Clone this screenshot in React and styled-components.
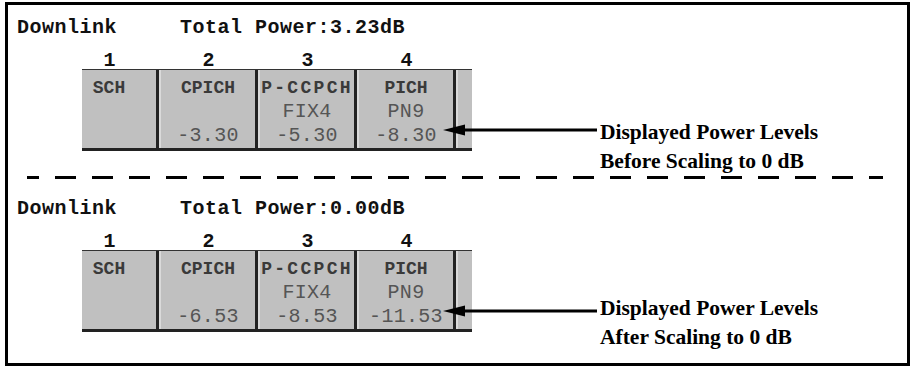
import React from 'react';
import styled, { createGlobalStyle } from 'styled-components';

const GlobalStyle = createGlobalStyle`
html, body {
  margin: 0;
  padding: 0;
  background: #ffffff;
}
`

const Frame = styled.div`
box-sizing: border-box;
width: 905px;
height: 364px;
margin: 2px 0 0 5px;
border: 3px solid #000;
display: flex;
flex-direction: column;
`

const Panel = styled.div`
display: flex;
align-items: flex-start;
height: ${props => props.height}px;
padding-top: ${props => props.top}px;
box-sizing: border-box;
`

const Display = styled.div`
width: 464px;
flex-shrink: 0;
font-family: "Liberation Mono", monospace;
`

const Header = styled.div`
display: flex;
padding-left: 9px;
font-size: 20px;
line-height: 20px;
font-weight: bold;
letter-spacing: 0.5px;
color: #111;
`

const HeaderName = styled.span`
width: 163px;
`

const Numbers = styled.div`
display: flex;
margin: 15px 0 0 52px;
font-size: 20px;
line-height: 16px;
font-weight: bold;
color: #111;
`

const Number = styled.div`
width: 99px;
text-align: center;
`

const Strip = styled.div`
width: 390px;
margin-left: 74px;
overflow: hidden;
border-top: 1px solid #333;
border-bottom: 3px solid #222;
background: #c0c0c0;
`

const Track = styled.div`
display: flex;
margin-left: -22px;
`

const Cell = styled.div`
flex-shrink: 0;
box-sizing: border-box;
width: 99px;
height: 78px;
padding-top: 6px;
border-left: 2px solid #dadada;
border-right: 3px solid #222;
display: flex;
flex-direction: column;
align-items: center;
`

const Label = styled.div`
font-size: 18px;
line-height: 24px;
font-weight: bold;
color: #3a3a3a;
letter-spacing: ${props => props.wide ? '2.3px' : '0'};
white-space: nowrap;
`

const Line = styled.div`
font-size: 20px;
line-height: 24px;
height: 24px;
color: #555;
letter-spacing: 0.3px;
white-space: nowrap;
`

const Callout = styled.div`
display: flex;
align-items: flex-start;
margin: 100px 0 0 -29px;
`

const Arrow = styled.svg`
flex-shrink: 0;
margin-top: 5px;
`

const Note = styled.div`
margin: ${props => -props.lift}px 0 0 3px;
font-family: "Liberation Serif", serif;
font-weight: bold;
font-size: 21.5px;
line-height: 28.5px;
color: #000;
white-space: nowrap;
`

const Dash = styled.div`
height: 3px;
width: 856px;
margin-left: 19px;
flex-shrink: 0;
background: repeating-linear-gradient(to right, #000 0 21px, transparent 21px 37px);
background-position: -9px 0;
`

const channels = [
  { name: 'SCH' },
  { name: 'CPICH' },
  { name: 'P-CCPCH', wide: true, data: 'FIX4' },
  { name: 'PICH', data: 'PN9' },
]

const Downlink = ({ total, levels, height, top, note, lift }) => (
  <Panel height={height} top={top}>
    <Display>
      <Header>
        <HeaderName>Downlink</HeaderName>
        <span>Total Power:{total}dB</span>
      </Header>
      <Numbers>
        {channels.map((c, i) => <Number key={i}>{i + 1}</Number>)}
      </Numbers>
      <Strip>
        <Track>
          {channels.map((c, i) => (
            <Cell key={c.name}>
              <Label wide={c.wide}>{c.name}</Label>
              <Line>{c.data}</Line>
              <Line>{levels[i]}</Line>
            </Cell>
          ))}
          <Cell />
        </Track>
      </Strip>
    </Display>
    <Callout>
      <Arrow width="154" height="14" viewBox="0 0 154 14">
        <polygon points="0,7 22,1.5 22,12.5" fill="#000" />
        <rect x="20" y="5.5" width="134" height="3" fill="#000" />
      </Arrow>
      <Note lift={lift}>
        Displayed Power Levels<br />
        {note}
      </Note>
    </Callout>
  </Panel>
)

export default function App() {
  return (
    <>
      <GlobalStyle />
      <Frame>
        <Downlink
          height={171}
          top={13}
          lift={0}
          total="3.23"
          levels={['', '-3.30', '-5.30', '-8.30']}
          note="Before Scaling to 0 dB"
        />
        <Dash />
        <Downlink
          height={184}
          top={20}
          lift={5}
          total="0.00"
          levels={['', '-6.53', '-8.53', '-11.53']}
          note="After Scaling to 0 dB"
        />
      </Frame>
    </>
  )
}
